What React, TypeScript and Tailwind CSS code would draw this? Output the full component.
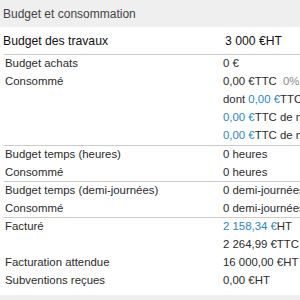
import React from "react";

type Cell = React.ReactNode;

const blue = "text-[#1e88d0]";

const groups: { label: string; value: Cell; h?: string }[][] = [
  [
    { label: "Budget achats", value: "0 €" },
    {
      label: "Consommé",
      value: (
        <>
          0,00 €TTC <span className="ml-[3px] text-[#8a8a8a]">0%</span>
        </>
      ),
    },
    {
      label: "",
      value: (
        <>
          dont <span className={blue}>0,00 €</span>TTC de non facturé
        </>
      ),
    },
    {
      label: "",
      value: (
        <>
          <span className={blue}>0,00 €</span>TTC de notes de frais
        </>
      ),
    },
    {
      label: "",
      value: (
        <>
          <span className={blue}>0,00 €</span>TTC de notes de frais
        </>
      ),
    },
  ],
  [
    { label: "Budget temps (heures)", value: "0 heures", h: "h-[17.5px]" },
    { label: "Consommé", value: "0 heures", h: "h-[17.5px]" },
  ],
  [
    { label: "Budget temps (demi-journées)", value: "0 demi-journées", h: "h-[17.5px]" },
    { label: "Consommé", value: "0 demi-journées", h: "h-[17.5px]" },
  ],
  [
    { label: "Facturé", value: <><span className={blue}>2 158,34 €</span>HT</> },
    { label: "", value: "2 264,99 €TTC" },
    { label: "Facturation attendue", value: "16 000,00 €HT" },
    { label: "Subventions reçues", value: "0,00 €HT" },
  ],
];

export default function App() {
  return (
    <div className="w-[300px] h-[300px] overflow-hidden bg-white font-['Liberation_Sans',Arial,sans-serif] text-[#2b2b2b]">
      <div className="h-[27px] bg-[#efefef] flex items-center pl-[3px] text-[12px] text-[#444]">
        Budget et consommation
      </div>

      <div className="h-[27px] flex items-center text-[12.2px] text-[#111] pt-[1px]">
        <div className="w-[225px] shrink-0 pl-[3px]">Budget des travaux</div>
        <div className="whitespace-nowrap">3 000 €HT</div>
      </div>

      <div className="ml-[4px] overflow-hidden">
        {groups.map((rows, gi) => (
          <div key={gi} className="border-t-[1.5px] border-[#cbcbcb]">
            {rows.map((row, ri) => (
              <div
                key={ri}
                className={`flex items-center ${row.h ?? "h-[18px]"} text-[11.4px] whitespace-nowrap`}
              >
                <div className="w-[219px] shrink-0 pl-[1px] overflow-hidden">{row.label}</div>
                <div className="shrink-0 whitespace-nowrap">{row.value}</div>
              </div>
            ))}
          </div>
        ))}
      </div>

      <div className="mt-[5px] h-[10px] bg-[#efefef]" />
    </div>
  );
}
